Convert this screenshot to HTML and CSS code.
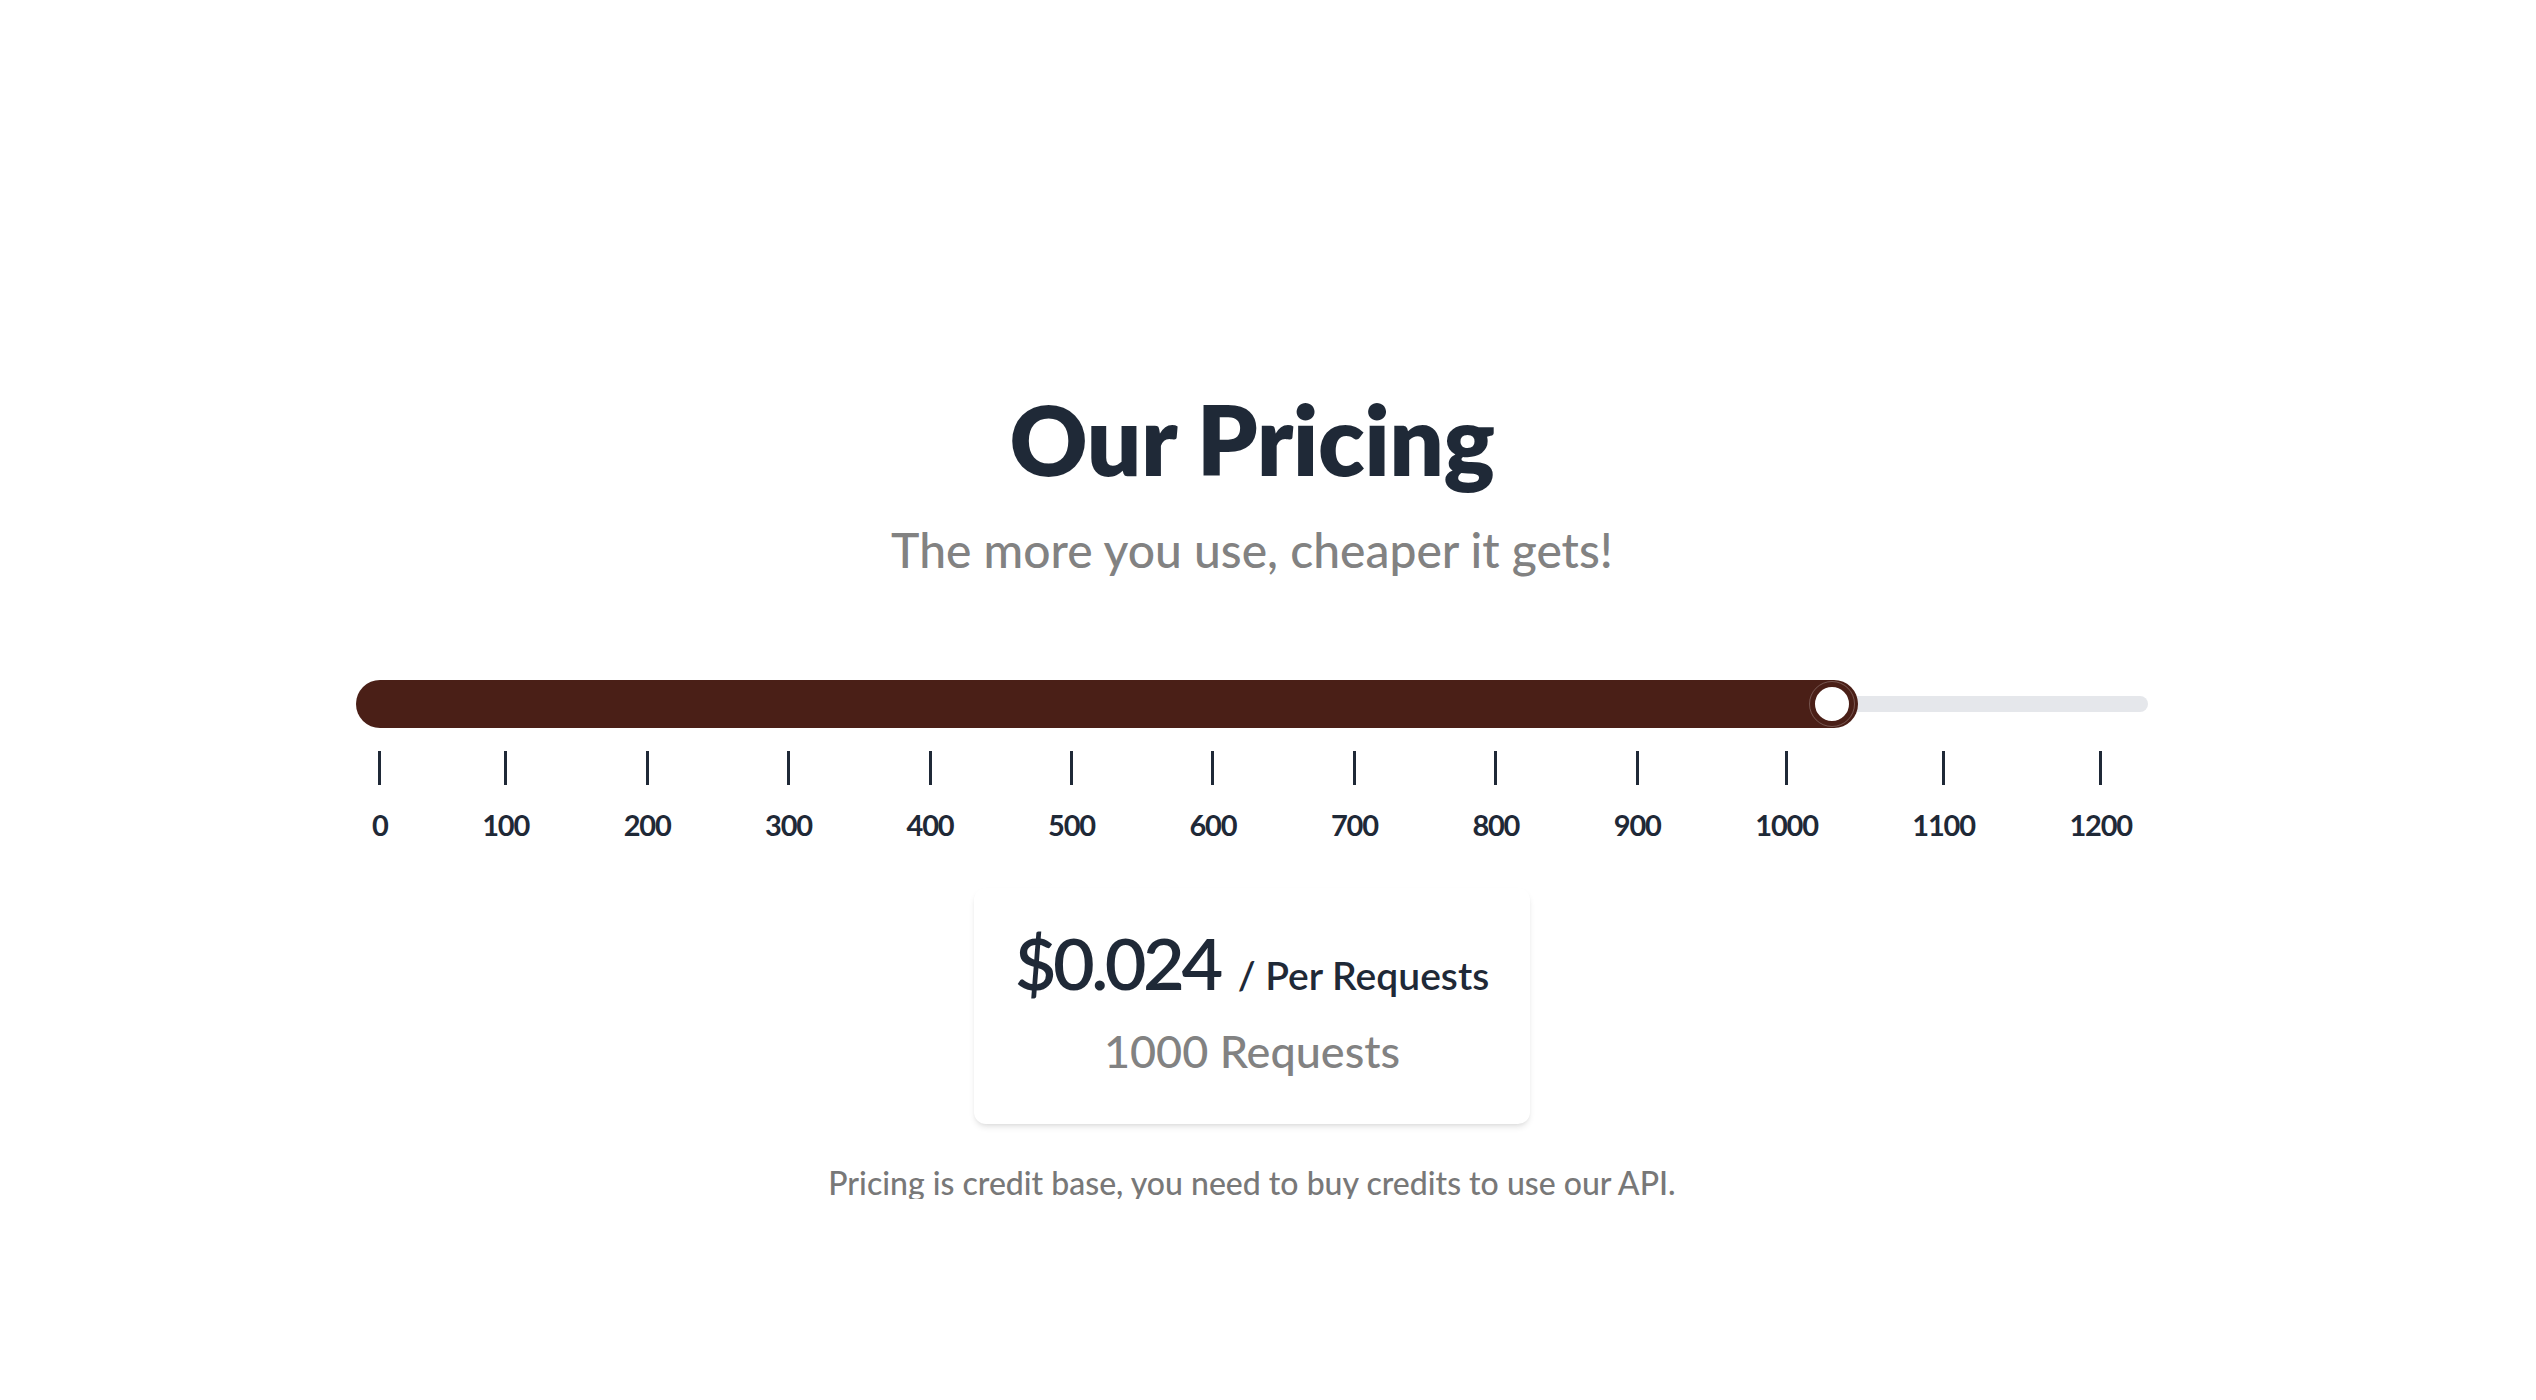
FILE: index.html
```html
<!DOCTYPE html>
<html lang="en">
<head>
<meta charset="utf-8">
<title>Our Pricing</title>
<link rel="stylesheet" href="styles.css">
</head>
<body>
<main class="page">
  <section class="pricing">
    <h1 class="title">Our Pricing</h1>
    <p class="subtitle">The more you use, cheaper it gets!</p>

    <div class="slider">
      <div class="track"></div>
      <div class="fill" style="width: 83.8%;">
        <span class="thumb"></span>
      </div>
    </div>

    <div class="scale">
      <div class="mark"><span class="tick"></span><span class="num">0</span></div>
      <div class="mark"><span class="tick"></span><span class="num">100</span></div>
      <div class="mark"><span class="tick"></span><span class="num">200</span></div>
      <div class="mark"><span class="tick"></span><span class="num">300</span></div>
      <div class="mark"><span class="tick"></span><span class="num">400</span></div>
      <div class="mark"><span class="tick"></span><span class="num">500</span></div>
      <div class="mark"><span class="tick"></span><span class="num">600</span></div>
      <div class="mark"><span class="tick"></span><span class="num">700</span></div>
      <div class="mark"><span class="tick"></span><span class="num">800</span></div>
      <div class="mark"><span class="tick"></span><span class="num">900</span></div>
      <div class="mark"><span class="tick"></span><span class="num">1000</span></div>
      <div class="mark"><span class="tick"></span><span class="num">1100</span></div>
      <div class="mark"><span class="tick"></span><span class="num">1200</span></div>
    </div>

    <div class="card">
      <div class="price-line">
        <span class="price">$0.024</span>
        <span class="per">/ Per Requests</span>
      </div>
      <div class="count">1000 Requests</div>
    </div>

    <p class="note">Pricing is credit base, you need to buy credits to use our API.</p>
  </section>
</main>
</body>
</html>
```

FILE: styles.css
```css
* {
  box-sizing: border-box;
}

html, body {
  margin: 0;
  padding: 0;
  background: #ffffff;
}

body {
  font-family: "Lato", "Open Sans", sans-serif;
  color: #1f2937;
}

.page {
  width: 100%;
  padding: 391px 32px 0 0;
}

.pricing {
  width: 1792px;
  margin: 0 auto;
  display: flex;
  flex-direction: column;
  align-items: center;
}

.title {
  margin: 0;
  font-size: 96px;
  line-height: 96px;
  font-weight: 800;
  color: #1f2937;
  letter-spacing: -0.5px;
}

.subtitle {
  margin: 39px 0 0;
  font-size: 48px;
  line-height: 48px;
  font-weight: 500;
  color: #828282;
}

.slider {
  position: relative;
  width: 100%;
  height: 48px;
  margin-top: 106px;
  display: flex;
  align-items: center;
}

.track {
  width: 100%;
  height: 16px;
  border-radius: 8px;
  background: #e5e7eb;
}

.fill {
  position: absolute;
  left: 0;
  top: 0;
  height: 48px;
  border-radius: 24px;
  background: #4a1f17;
}

.thumb {
  position: absolute;
  right: 3px;
  top: 1px;
  width: 46px;
  height: 46px;
  border-radius: 50%;
  background: #ffffff;
  border: 6px solid #4a1f17;
  outline: 1px solid rgba(255, 255, 255, 0.25);
  outline-offset: -1px;
}

.scale {
  width: 100%;
  margin-top: 23px;
  padding: 0 16px;
  display: flex;
  justify-content: space-between;
}

.mark {
  display: flex;
  flex-direction: column;
  align-items: center;
}

.tick {
  width: 3px;
  height: 34px;
  background: #1f2937;
}

.num {
  margin-top: 25px;
  font-size: 29px;
  line-height: 30px;
  font-weight: 700;
  letter-spacing: -1.2px;
  color: #1f2937;
}

.card {
  margin-top: 48px;
  padding: 38px 41px 50px;
  background: #ffffff;
  border-radius: 12px;
  box-shadow: 0 4px 6px -1px rgba(0, 0, 0, 0.1), 0 2px 4px -2px rgba(0, 0, 0, 0.08);
  display: flex;
  flex-direction: column;
  align-items: center;
}

.price-line {
  display: flex;
  align-items: baseline;
  gap: 18px;
  line-height: 72px;
}

.price {
  font-size: 72px;
  line-height: 72px;
  font-weight: 600;
  letter-spacing: -3.5px;
  color: #1f2937;
}

.per {
  font-size: 39px;
  font-weight: 600;
  color: #1f2937;
}

.count {
  margin-top: 18px;
  font-size: 45px;
  line-height: 45px;
  font-weight: 500;
  color: #828282;
}

.note {
  margin: 43px 0 0;
  font-size: 32px;
  line-height: 32px;
  font-weight: 500;
  color: #787878;
}
```
